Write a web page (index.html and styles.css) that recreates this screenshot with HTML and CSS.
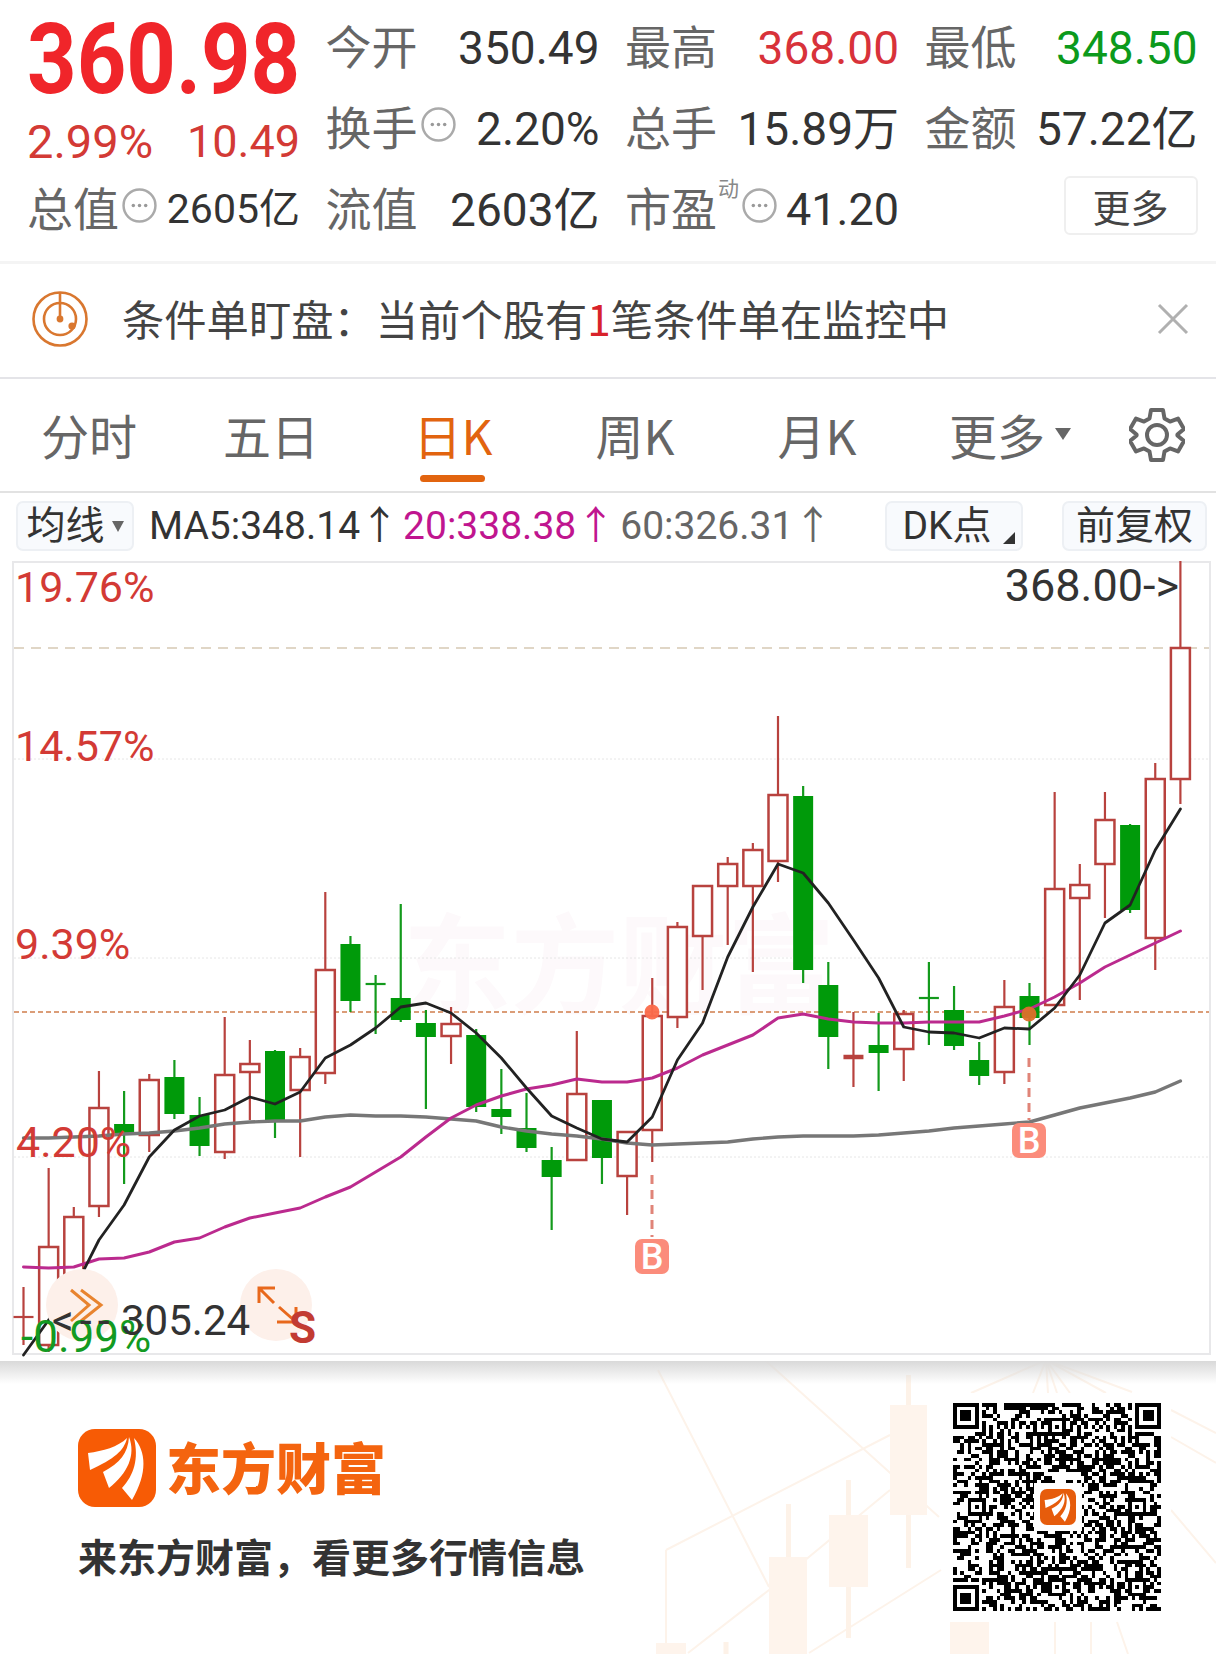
FILE: index.html
```html
<!DOCTYPE html>
<html lang="zh-CN">
<head>
<meta charset="utf-8">
<title>东方财富 行情</title>
<link rel="stylesheet" href="styles.css">
</head>
<body>
<main class="page">
  <section class="quote">
    <div class="cell price-cell"><span class="price">360.98</span></div>
    <div class="cell"><span class="label">今开</span><span class="val">350.49</span></div>
    <div class="cell"><span class="label">最高</span><span class="val up">368.00</span></div>
    <div class="cell"><span class="label">最低</span><span class="val down">348.50</span></div>

    <div class="cell change-cell"><span class="val up-soft">2.99%</span><span class="val up-soft up-amount">10.49</span></div>
    <div class="cell"><span class="label-group"><span class="label">换手</span><svg class="info" viewBox="0 0 34 34"><circle cx="17" cy="17" r="15.500" class="info-ring"/><circle cx="11" cy="17" r="1.700"/><circle cx="17" cy="17" r="1.700"/><circle cx="23" cy="17" r="1.700"/></svg></span><span class="val">2.20%</span></div>
    <div class="cell"><span class="label">总手</span><span class="val">15.89万</span></div>
    <div class="cell"><span class="label">金额</span><span class="val">57.22亿</span></div>

    <div class="cell"><span class="label-group"><span class="label">总值</span><svg class="info" viewBox="0 0 34 34"><circle cx="17" cy="17" r="15.500" class="info-ring"/><circle cx="11" cy="17" r="1.700"/><circle cx="17" cy="17" r="1.700"/><circle cx="23" cy="17" r="1.700"/></svg></span><span class="val val-small">2605亿</span></div>
    <div class="cell"><span class="label">流值</span><span class="val">2603亿</span></div>
    <div class="cell"><span class="label-group"><span class="label">市盈</span><sup class="sup">动</sup><svg class="info info-after-sup" viewBox="0 0 34 34"><circle cx="17" cy="17" r="15.500" class="info-ring"/><circle cx="11" cy="17" r="1.700"/><circle cx="17" cy="17" r="1.700"/><circle cx="23" cy="17" r="1.700"/></svg></span><span class="val val-pe">41.20</span></div>
    <div class="cell more-cell"><button class="more">更多</button></div>
  </section>

  <section class="notice">
    <svg class="notice-icon" viewBox="0 0 60 60"><circle cx="30" cy="30" r="26.500"/><circle cx="30" cy="30" r="16"/><path d="M30 3V30"/><circle cx="30" cy="30" r="3.400" class="dot"/><circle cx="42" cy="37" r="3.600" class="dot"/></svg>
    <p class="notice-text">条件单盯盘：当前个股有<span class="notice-num">1</span>笔条件单在监控中</p>
    <svg class="close" viewBox="0 0 32 32"><path d="M2 2L30 30M30 2L2 30"/></svg>
  </section>

  <nav class="tabs">
    <span class="tab">分时</span>
    <span class="tab">五日</span>
    <span class="tab active">日K</span>
    <span class="tab">周K</span>
    <span class="tab">月K</span>
    <span class="tab tab-more">更多<i class="caret"></i></span>
    <svg class="gear" viewBox="0 0 56 56"><path d="M22 3H34L35.500 11.500L41 14.600L49 11.600L55 22L48.400 27.500V28.500L55 34L49 44.400L41 41.400L35.500 44.500L34 53H22L20.500 44.500L15 41.400L7 44.400L1 34L7.600 28.500V27.500L1 22L7 11.600L15 14.600L20.500 11.500Z"/><circle cx="28" cy="28" r="10"/></svg>
  </nav>

  <div class="ma-row">
    <button class="chip chip-ma">均线<i class="caret caret-small"></i></button>
    <span class="ma ma5">MA5:348.14↑</span>
    <span class="ma ma20">20:338.38↑</span>
    <span class="ma ma60">60:326.31↑</span>
    <button class="chip chip-dk">DK点<i class="corner"></i></button>
    <button class="chip chip-fq">前复权</button>
  </div>

  <svg class="chart" viewBox="0 561 1216 800" width="1216" height="800">
    <rect class="frame" x="13" y="562" width="1197" height="792"/>
    <text class="watermark" x="403" y="1005">东方财富</text>
    <path class="grid" d="M14 759H1209M14 958H1209M14 1157H1209"/>
    <path class="limit" d="M14 648H1209"/>
    <path class="prev" d="M14 1012H1209"/>
    <g id="candles"></g>
    <g id="lines"></g>
    <circle class="signal" cx="652" cy="1012" r="7.500"/>
    <circle class="signal signal-2" cx="1029" cy="1014" r="7.500"/>
    <path class="b-line" d="M652 1175V1237M1029 1058V1120"/>
    <rect class="b-box" x="635" y="1239" width="34" height="35" rx="7"/>
    <text class="b-text" x="652" y="1269">B</text>
    <rect class="b-box" x="1012" y="1123" width="34" height="35" rx="7"/>
    <text class="b-text" x="1029" y="1153">B</text>
    <text class="axis up-axis" x="15" y="602">19.76%</text>
    <text class="axis up-axis" x="15" y="761">14.57%</text>
    <text class="axis up-axis" x="15" y="959">9.39%</text>
    <text class="axis up-axis" x="16" y="1157">4.20%</text>
    <text class="axis marker marker-large end" x="1179" y="601">368.00-&gt;</text>
    <circle class="tool" cx="82" cy="1305" r="36"/>
    <circle class="tool" cx="276" cy="1305" r="36"/>
    <path class="chev" d="M71 1290L89 1305L71 1321M81 1290L101 1305L81 1321"/>
    <path class="arrows" d="M259 1303V1288H275M259 1288L274 1303M277 1322H296V1307M279 1307L296 1322"/>
    <text class="s-mark" x="289" y="1343">S</text>
    <text class="axis down-axis" x="21" y="1352">-0.99%</text>
    <text class="axis marker arrow-left" x="52" y="1335">&lt;--</text>
    <text class="axis marker marker-small" x="121" y="1335">305.24</text>
  </svg>

  <footer class="promo">
    <svg class="decor" viewBox="640 1361 576 293" width="576" height="293">
      <path class="decor-line" d="M765 1360L939 1517M666 1550L890 1435M658 1370L769 1587M809 1653L941 1570M688 1653L769 1590M769 1590L890 1490M1046 1360L971 1393M1046 1360L1033 1393M1046 1360L1048 1393M1046 1360L1057 1393M1046 1360L1070 1393M1046 1360L1106 1393M1046 1360L1132 1392M1171 1410L1216 1433M1171 1437L1216 1463M1171 1510L1216 1563M666 1550V1650M1055 1622V1654M1091 1622V1654M1117 1622L1128 1654"/>
      <path class="decor-wick" d="M908.500 1375V1568M848.500 1480V1638M788.500 1504V1654M726 1642V1654"/>
      <rect class="decor-body" x="890" y="1405" width="37" height="110"/>
      <rect class="decor-body" x="829" y="1515" width="39" height="72"/>
      <rect class="decor-body" x="769" y="1557" width="38" height="97"/>
      <rect class="decor-body" x="950" y="1622" width="39" height="32"/>
      <rect class="decor-body" x="656" y="1643" width="30" height="11"/>
    </svg>
    <div class="brand">
      <div class="brand-row">
        <svg class="logo" viewBox="0 0 78 78"><rect width="78" height="78" rx="17" class="logo-bg"/><path class="logo-wing" d="M10 24C25 22 40 18 49 9C46 22 36 30 12 41Z"/><path class="logo-wing" d="M25 43C42 34 50 24 51 8C58 26 50 44 31 59Z"/><path class="logo-wing" d="M56 9C68 22 70 44 54 71L44 59C56 46 61 30 56 9Z"/></svg>
        <span class="brand-name">东方财富</span>
      </div>
      <p class="slogan">来东方财富，看更多行情信息</p>
    </div>
    <div class="qr-wrap">
      <svg id="qr" class="qr" viewBox="0 0 57 57" width="208" height="208" shape-rendering="crispEdges"></svg>
      <span class="qr-logo-box">
        <svg class="qr-logo" viewBox="0 0 78 78"><rect width="78" height="78" rx="15" class="logo-bg-dark"/><path class="logo-wing" d="M10 24C25 22 40 18 49 9C46 22 36 30 12 41Z"/><path class="logo-wing" d="M25 43C42 34 50 24 51 8C58 26 50 44 31 59Z"/><path class="logo-wing" d="M56 9C68 22 70 44 54 71L44 59C56 46 61 30 56 9Z"/></svg>
      </span>
    </div>
  </footer>
</main>
<script src="chart.js"></script>
</body>
</html>
```
FILE: styles.css
```css
* { box-sizing: border-box; }
html, body { margin: 0; padding: 0; background: #fff; }
body { font-family: Roboto, "Noto Sans CJK SC", sans-serif; color: #333; }
.page { width: 1216px; height: 1654px; overflow: hidden; display: flex; flex-direction: column; }
button { font: inherit; color: inherit; cursor: pointer; }
p { margin: 0; }

/* quote */
.quote { height: 264px; padding: 7px 0 0 27px; display: grid; grid-template-columns: 273px 274px 274px 273px; grid-auto-rows: 81px; column-gap: 25.500px; border-bottom: 3px solid #f4f4f4; }
.cell { display: flex; align-items: center; justify-content: space-between; min-width: 0; white-space: nowrap; }
.label { font-size: 46px; color: #666; line-height: 1; }
.label-group { display: flex; align-items: center; }
.val { font-size: 46px; color: #333; line-height: 1; }
.val-small { font-size: 41px; }
.val-pe { font-size: 45px; }
.up { color: #d8323a; }
.up-soft { color: #d33a35; font-size: 47px; }
.up-amount { font-size: 45px; }
.down { color: #0c9a1c; }
.price { font-size: 86.500px; font-weight: 700; color: #f0252a; line-height: 1; transform: scaleY(1.130); display: block; }
.price-cell { padding-top: 26px; }
.change-cell { padding-top: 26px; }
.info { width: 35px; height: 35px; margin: 0 0 8px 3px; fill: #999; flex: none; }
.info-ring { fill: none; stroke: #aaa; stroke-width: 2.400; }
.info-after-sup { margin-left: 3px; }
.sup { font-size: 21px; color: #888; line-height: 1; align-self: flex-start; margin: -8px 0 0 1px; vertical-align: baseline; }
.more-cell { justify-content: flex-end; padding-bottom: 8px; }
.more { width: 134px; height: 59px; background: #fff; border: 2px solid #efefef; border-radius: 6px; font-size: 38px; line-height: 1; padding: 0; color: #444; font-family: "Noto Sans CJK SC", sans-serif; }

/* notice */
.notice { height: 115px; display: flex; align-items: center; padding: 0 27px 4px 30px; border-bottom: 2px solid #e4e4e8; }
.notice-icon { width: 60px; height: 60px; fill: none; stroke: #d9772f; stroke-width: 2.600; flex: none; }
.notice-icon .dot { fill: #d9772f; stroke: none; }
.notice-text { margin-left: 32px; font-size: 42.300px; line-height: 1; color: #444; flex: 1; font-family: "Noto Sans CJK SC", sans-serif; white-space: nowrap; }
.notice-num { color: #d8222a; }
.close { width: 32px; height: 32px; fill: none; stroke: #b0b0b0; stroke-width: 3; flex: none; }

/* tabs */
.tabs { height: 114px; display: flex; align-items: center; border-bottom: 2px solid #e2e2e2; padding-bottom: 3px; }
.tab { position: relative; width: 182px; height: 100%; margin-left: 0; display: flex; align-items: center; justify-content: center; font-size: 48px; color: #666; line-height: 1; font-family: "Noto Sans CJK SC", sans-serif; }
.tab:first-child { margin-left: -2px; }
.tab.active { color: #e2640f; }
.tab.active::after { content: ""; position: absolute; left: 50%; bottom: 6px; width: 65px; height: 7px; margin-left: -33px; border-radius: 4px; background: #e2640f; }
.tab-more { padding-left: 22px; }
.caret { display: inline-block; width: 0; height: 0; border-left: 8px solid transparent; border-right: 8px solid transparent; border-top: 12px solid #666; margin-left: 10px; }
.gear { width: 56px; height: 56px; margin-left: 39px; margin-top: 2px; fill: none; stroke: #666; stroke-width: 4; stroke-linejoin: round; }

/* MA row */
.ma-row { height: 68px; display: flex; align-items: center; padding: 0 9px 2px 16px; font-size: 39px; white-space: nowrap; }
.chip { height: 50px; border: 2px solid #edf0f4; border-radius: 7px; background: #f8fafd; display: flex; align-items: center; justify-content: center; padding: 0; position: relative; font-size: 39px; line-height: 1; color: #333; font-family: Roboto, "Noto Sans CJK SC", sans-serif; }
.chip-ma { width: 118px; }
.caret-small { border-left-width: 6px; border-right-width: 6px; border-top-width: 11px; margin: 0 0 0 7px; }
.chip-dk { width: 138px; margin-left: auto; padding-right: 14px; }
.chip-fq { width: 145px; margin-left: 39px; }
.corner { position: absolute; right: 6px; bottom: 5px; width: 0; height: 0; border-left: 12px solid transparent; border-bottom: 12px solid #333; }
.ma { line-height: 1; font-family: Roboto, "Noto Sans CJK SC", sans-serif; }
.ma5 { margin-left: 15px; color: #333; }
.ma20 { margin-left: 4px; color: #c0158f; }
.ma60 { margin-left: 5px; color: #666; }

/* chart */
.chart { display: block; flex: none; }
.frame { fill: #fff; stroke: #e8e8ea; stroke-width: 2; }
.watermark { font: 700 108px "Noto Sans CJK SC", sans-serif; fill: #fdf9fb; }
.grid { stroke: #e6e6e6; stroke-width: 1; stroke-dasharray: 2 2; fill: none; }
.limit { stroke: #e0d6c6; stroke-width: 2; stroke-dasharray: 10 7; fill: none; }
.prev { stroke: #cf7d4c; stroke-width: 1.500; stroke-dasharray: 5 3; fill: none; }
.wick { stroke-width: 2.200; fill: none; }
.wick-r { stroke: #b8423e; }
.wick-g { stroke: #139a1c; }
.doji-thick { stroke-width: 4.500; }
.body-r { fill: #fff; stroke: #b8423e; stroke-width: 2.500; }
.body-g { fill: #009a0a; }
.line { fill: none; stroke-linejoin: round; stroke-linecap: round; }
.l5 { stroke: #222; stroke-width: 2.800; }
.l20 { stroke: #bb2a8e; stroke-width: 3; }
.l60 { stroke: #777; stroke-width: 3.400; }
.signal { fill: #fb6a4a; opacity: .95; }
.signal-2 { fill: #de6f2b; }
.b-line { stroke: #e08478; stroke-width: 3; stroke-dasharray: 9 6; fill: none; }
.b-box { fill: #fb8c7b; }
.b-text { font: 500 36px Roboto, sans-serif; fill: #fff; text-anchor: middle; }
.axis { font: 400 43px Roboto, sans-serif; }
.up-axis { fill: #d33a35; }
.down-axis { fill: #129a22; font-size: 44px; }
.marker { fill: #333; }
.marker-large { font-size: 45px; }
.marker-small { font-size: 42px; }
.end { text-anchor: end; }
.arrow-left { letter-spacing: 6px; }
.tool { fill: #fdf0ea; }
.chev { fill: none; stroke: #e8842f; stroke-width: 3; }
.arrows { fill: none; stroke: #e8681c; stroke-width: 3; }
.s-mark { font: 700 44px Roboto, sans-serif; fill: #c23b32; }

/* promo */
.promo { position: relative; flex: 1; display: flex; justify-content: space-between; align-items: flex-start; padding: 68px 45px 0 78px; overflow: hidden; background: #fff; }
.promo::before { content: ""; position: absolute; left: 0; right: 0; top: 0; height: 23px; background: linear-gradient(#d9d9d9, rgba(255, 255, 255, 0)); z-index: 1; }
.decor { position: absolute; right: 0; top: 0; }
.decor-line { fill: none; stroke: #fdf3ea; stroke-width: 2; }
.decor-wick { fill: none; stroke: #fdf2e8; stroke-width: 5; }
.decor-body { fill: #fef4ec; }
.brand { position: relative; }
.brand-row { display: flex; align-items: center; gap: 10px; }
.logo { width: 78px; height: 78px; flex: none; }
.logo-bg { fill: #f75b05; }
.logo-bg-dark { fill: #e65c0c; }
.logo-wing { fill: #fff; }
.brand-name { font: 900 55px/1 "Noto Sans CJK SC", sans-serif; color: #f4640f; padding-bottom: 6px; }
.slogan { margin-top: 26px; font: 700 39px/44px "Noto Sans CJK SC", sans-serif; color: #333; white-space: nowrap; }
.qr-wrap { position: relative; margin-top: -36px; padding: 10px; background: #fff; flex: none; }
.qr { display: block; fill: #000; }
.qr-logo-box { position: absolute; left: 91px; top: 90px; width: 48px; height: 48px; background: #fff; display: flex; align-items: center; justify-content: center; }
.qr-logo { width: 36px; height: 36px; }
```
FILE: chart.js
```js
(function () {
  var NS = 'http://www.w3.org/2000/svg';
  // wick top, body top, body bottom, wick bottom, colour, thick doji
  var K = [
    [1287,1317,1317,1345,'r'],[1168,1247,1345,1352,'r'],[1207,1217,1275,1275,'r'],[1071,1108,1206,1217,'r'],
    [1091,1124,1135,1184,'g'],[1074,1080,1135,1152,'r'],[1060,1077,1114,1119,'g'],[1097,1115,1146,1156,'g'],
    [1017,1075,1152,1159,'r'],[1040,1064,1072,1120,'r'],[1050,1051,1120,1138,'g'],[1048,1057,1090,1157,'r'],
    [892,970,1073,1084,'r'],[936,944,1001,1012,'g'],[975,984,984,1034,'g'],[904,998,1020,1022,'g'],
    [1010,1023,1037,1109,'g'],[1007,1024,1036,1064,'r'],[1029,1035,1107,1112,'g'],[1069,1109,1117,1134,'g'],
    [1093,1128,1148,1152,'g'],[1147,1160,1177,1230,'g'],[1031,1094,1160,1160,'r'],[1100,1100,1158,1184,'g'],
    [1132,1132,1176,1215,'r'],[978,1016,1130,1162,'r'],[922,927,1017,1028,'r'],[886,886,936,990,'r'],
    [857,864,886,945,'r'],[843,850,886,972,'r'],[716,795,861,882,'r'],[786,796,970,983,'g'],
    [962,985,1037,1069,'g'],[1012,1057,1057,1087,'r',1],[1013,1045,1053,1091,'g'],[1010,1014,1049,1081,'r'],
    [962,998,998,1045,'g'],[986,1010,1046,1050,'g'],[1042,1060,1076,1085,'g'],[980,1007,1072,1084,'r'],
    [983,996,1018,1045,'g'],[792,889,1005,1005,'r'],[864,885,898,1000,'r'],[792,820,864,918,'r'],
    [824,825,910,913,'g'],[763,779,938,970,'r'],[561,648,779,804,'r']
  ];
  var MA5 = [1355,1320,1290,1240,1205,1157,1130,1116,1110,1097,1104,1092,1058,1045,1028,1007,1003,1013,1033,1058,1088,1116,1128,1139,1142,1117,1060,1023,957,907,864,873,903,940,978,1027,1032,1033,1038,1028,1029,1008,975,923,905,850,809];
  var MA20 = [1267,1268,1267,1259,1258,1252,1242,1238,1227,1218,1213,1208,1197,1187,1172,1157,1137,1118,1105,1096,1089,1085,1079,1082,1082,1078,1068,1055,1045,1035,1018,1014,1019,1022,1023,1023,1022,1022,1022,1016,1009,997,983,967,955,943,931];
  var MA60 = [1138,1138,1137,1136,1134,1133,1131,1128,1124,1122,1121,1121,1117,1115,1116,1116,1117,1119,1121,1127,1131,1134,1136,1139,1143,1145,1144,1143,1142,1139,1137,1136,1136,1136,1135,1133,1131,1128,1126,1124,1122,1115,1108,1103,1098,1092,1081];

  function el(name, attrs, parent) {
    var n = document.createElementNS(NS, name);
    for (var k in attrs) n.setAttribute(k, attrs[k]);
    parent.appendChild(n);
    return n;
  }
  function cx(i) { return 23.5 + 25.15 * i; }

  var candles = document.getElementById('candles');
  K.forEach(function (c, i) {
    var x = cx(i), kind = c[4];
    el('path', { 'class': 'wick wick-' + kind, d: 'M' + x + ' ' + c[0] + 'V' + c[3] }, candles);
    if (c[1] === c[2]) {
      el('path', {
        'class': 'wick wick-' + kind + (c[5] ? ' doji-thick' : ''),
        d: 'M' + (x - 10) + ' ' + c[1] + 'H' + (x + 10)
      }, candles);
    } else if (kind === 'r') {
      el('rect', { 'class': 'body-r', x: x - 9.5, y: c[1], width: 19, height: c[2] - c[1] }, candles);
    } else {
      el('rect', { 'class': 'body-g', x: x - 10, y: c[1], width: 20, height: c[2] - c[1] }, candles);
    }
  });

  var lines = document.getElementById('lines');
  [[MA60, 'l60'], [MA20, 'l20'], [MA5, 'l5']].forEach(function (s) {
    var pts = s[0].map(function (y, i) { return cx(i) + ',' + y; }).join(' ');
    el('polyline', { 'class': 'line ' + s[1], points: pts }, lines);
  });

  // QR code modules
  var N = 57, seed = 20240517, grid = [];
  function rnd() {
    seed = (seed + 0x6D2B79F5) | 0;
    var t = Math.imul(seed ^ (seed >>> 15), 1 | seed);
    t = (t + Math.imul(t ^ (t >>> 7), 61 | t)) ^ t;
    return ((t ^ (t >>> 14)) >>> 0) / 4294967296;
  }
  for (var y = 0; y < N; y++) {
    grid[y] = [];
    for (var x = 0; x < N; x++) grid[y][x] = rnd() > 0.5 ? 1 : 0;
  }
  function stamp(px, py, size, quiet) {
    for (var yy = py - quiet; yy < py + size + quiet; yy++) {
      for (var xx = px - quiet; xx < px + size + quiet; xx++) {
        if (yy < 0 || xx < 0 || yy >= N || xx >= N) continue;
        var dx = Math.min(xx - px, px + size - 1 - xx);
        var dy = Math.min(yy - py, py + size - 1 - yy);
        var d = Math.min(dx, dy);
        grid[yy][xx] = d < 0 ? 0 : (d === 1 ? 0 : 1);
      }
    }
  }
  for (var t = 8; t < N - 8; t++) { grid[6][t] = t % 2 ? 0 : 1; grid[t][6] = t % 2 ? 0 : 1; }
  stamp(0, 0, 7, 1); stamp(N - 7, 0, 7, 1); stamp(0, N - 7, 7, 1);
  [[28, 6], [6, 28], [50, 28], [28, 50], [50, 50]].forEach(function (a) { stamp(a[0] - 2, a[1] - 2, 5, 0); });
  var d = '';
  for (var r = 0; r < N; r++) {
    for (var q = 0; q < N; q++) {
      if (grid[r][q]) d += 'M' + q + ' ' + r + 'h1v1h-1z';
    }
  }
  el('path', { d: d }, document.getElementById('qr'));
})();
```
